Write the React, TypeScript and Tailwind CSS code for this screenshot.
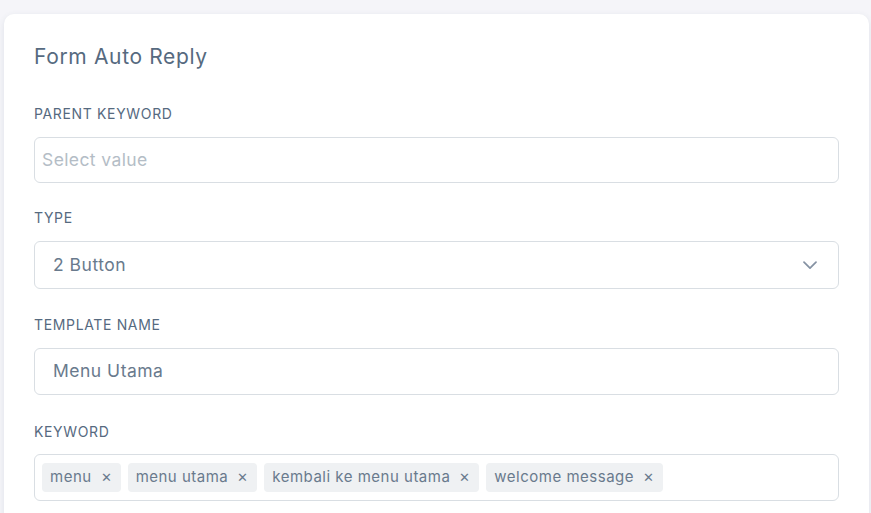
const tags = ["menu", "menu utama", "kembali ke menu utama", "welcome message"]

export default function App() {
  return (
    <div className="min-h-[513px] bg-[#f5f5f9] pt-[14px] pl-1 pr-[2px] font-['Inter','Noto_Sans',sans-serif] overflow-hidden h-[513px]">
      <div className="bg-white rounded-t-[10px] shadow-[0_2px_6px_0_rgba(67,89,113,0.12)] px-[30px] pt-[29px] pb-10">
        <h5 className="text-[21px] leading-7 tracking-[0.65px] text-[#566a7f] font-normal mb-[33px]">Form Auto Reply</h5>

        <label className="block text-[14px] leading-5 tracking-[0.65px] uppercase text-[#566a7f] mb-[13px]">Parent Keyword</label>
        <div className="h-[46px] border border-[#d9dee3] rounded-[6px] flex items-center px-[7px] mb-[25px]">
          <span className="text-[17.5px] tracking-[0.4px] text-[#b4bdc6]">Select value</span>
        </div>

        <label className="block text-[14px] leading-5 tracking-[0.65px] uppercase text-[#566a7f] mb-[13px]">Type</label>
        <div className="h-[48px] border border-[#d9dee3] rounded-[6px] flex items-center justify-between pl-[18px] pr-[21px] mb-[26px]">
          <span className="text-[17.5px] tracking-[0.5px] text-[#697a8d]">2 Button</span>
          <svg width="14" height="9" viewBox="0 0 14 9" fill="none" className="text-[#8592a3]">
            <polyline points="1,1.2 7,7.2 13,1.2" stroke="currentColor" strokeWidth="1.7" strokeLinecap="round" strokeLinejoin="round" />
          </svg>
        </div>

        <label className="block text-[14px] leading-5 tracking-[0.65px] uppercase text-[#566a7f] mb-[13px]">Template Name</label>
        <div className="h-[47px] border border-[#d9dee3] rounded-[6px] flex items-center px-[18px] mb-[27px]">
          <span className="text-[17.5px] tracking-[0.5px] text-[#697a8d]">Menu Utama</span>
        </div>

        <label className="block text-[14px] leading-5 tracking-[0.65px] uppercase text-[#566a7f] mb-[12px]">Keyword</label>
        <div className="h-[47px] border border-[#d9dee3] rounded-[6px] flex items-center gap-[7px] px-[7px]">
          {tags.map((t) => (
            <span key={t} className="h-[29px] bg-[#eff1f3] rounded-[4px] flex items-center gap-[9px] pl-[8px] pr-[9px] text-[15px] tracking-[0.5px] text-[#697a8d]">
              {t}
              <span className="text-[13px] tracking-normal text-[#697a8d]">✕</span>
            </span>
          ))}
        </div>
      </div>
    </div>
  )
}
